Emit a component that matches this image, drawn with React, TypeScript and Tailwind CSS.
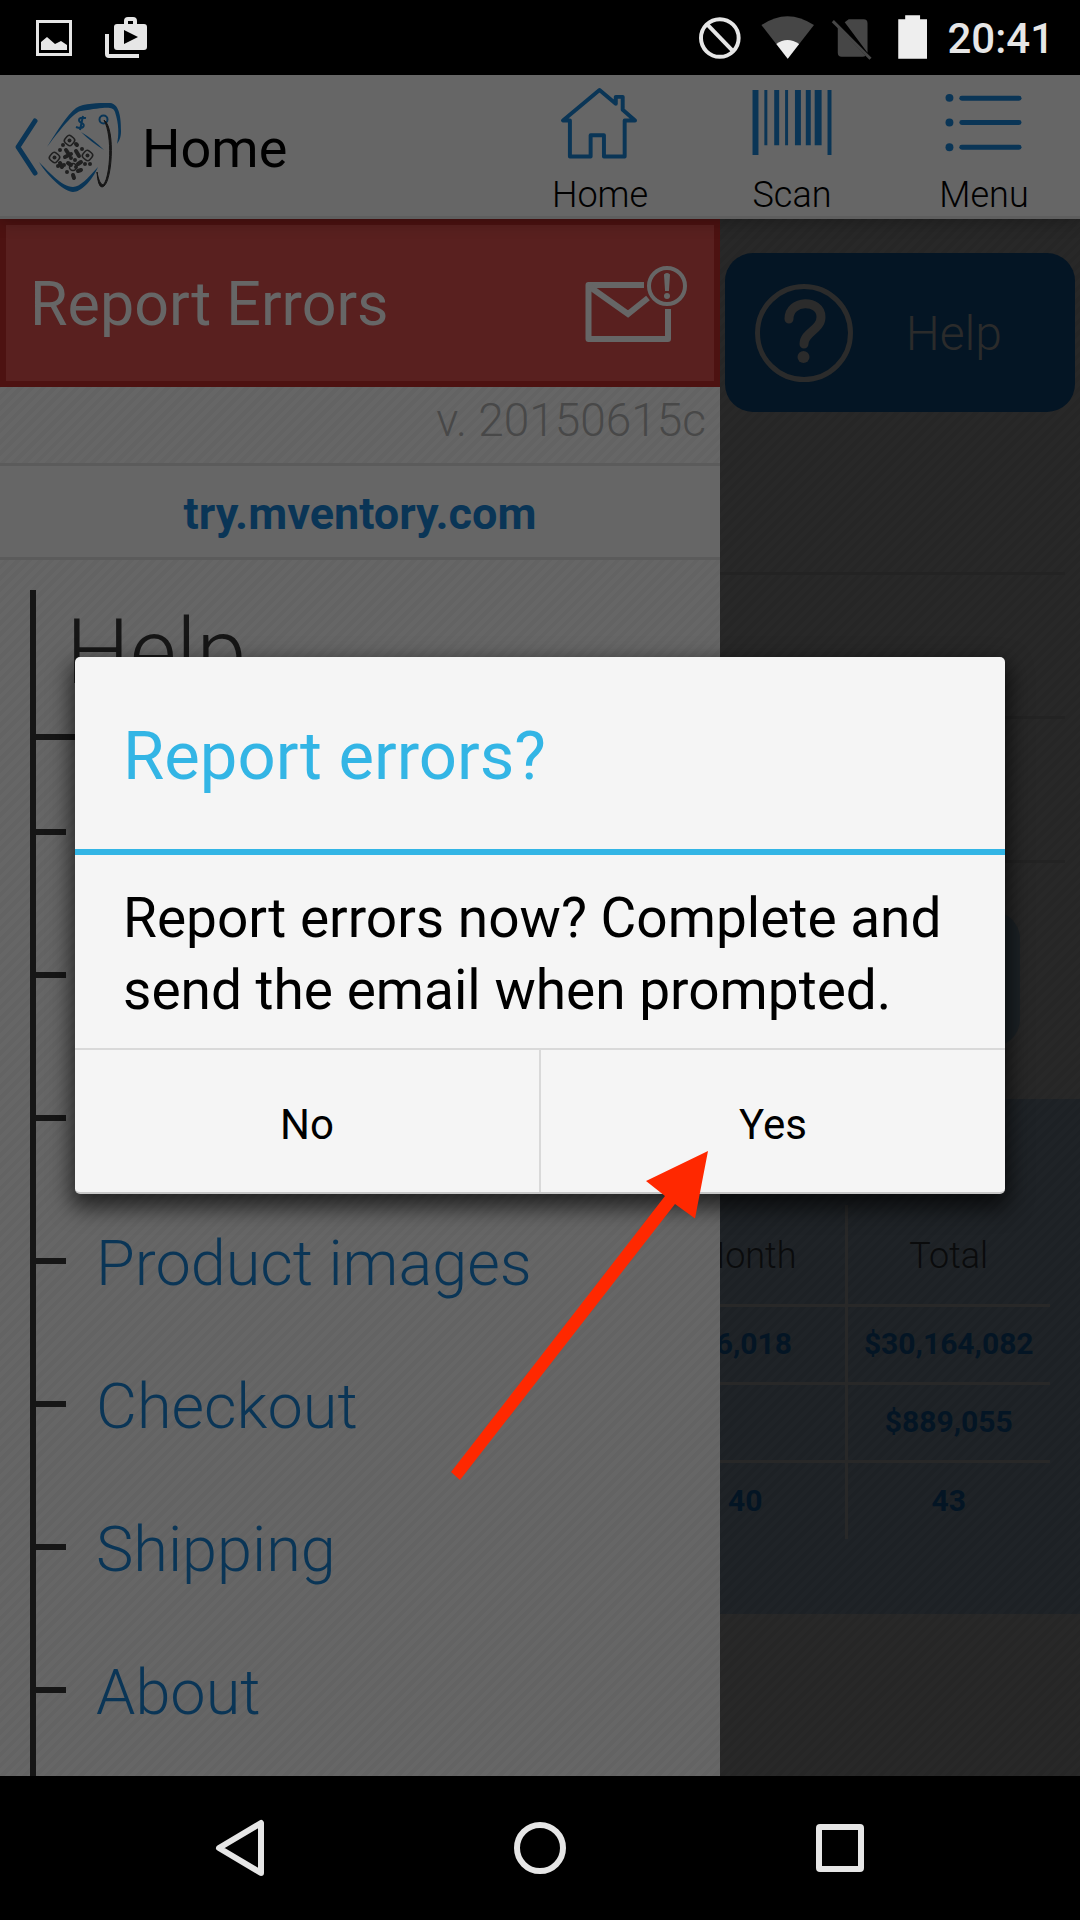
import React from "react";

const stripesLight =
  "bg-[repeating-linear-gradient(135deg,#666666_0_4px,#636363_4px_8px)]";
const stripesDark =
  "bg-[repeating-linear-gradient(135deg,#282828_0_4px,#262626_4px_8px)]";
const stripesBlue =
  "bg-[repeating-linear-gradient(135deg,#1f2327_0_4px,#1d2125_4px_8px)]";

function StatusBar() {
  return (
    <div className="flex h-[75px] items-center justify-between bg-black pr-[26px] pl-9 text-[#e6e6e6]">
      <div className="flex items-center gap-[33px]">
        <svg width="36" height="36" viewBox="0 0 36 36" fill="currentColor">
          <path fillRule="evenodd" d="M0 0h36v36H0zM3 3v30h30V3z" />
          <path d="M5 30v-8l6-5 8 7 6-3 6 4v5z" />
        </svg>
        <svg width="42" height="42" viewBox="0 0 42 42" fill="currentColor">
          <path d="M0 17h4v20h30v4H4q-4 0-4-4z" />
          <path
            fillRule="evenodd"
            d="M12 7h7V4q0-4 4-4h5q4 0 4 4v3h7q3 0 3 3v20q0 3-3 3H12q-3 0-3-3V10q0-3 3-3zM23 4v3h5V4zM19 13v14l14-7z"
          />
        </svg>
      </div>
      <div className="flex items-center">
        <svg width="228" height="46" viewBox="698 15 230 46">
          <g fill="none" stroke="#e6e6e6" strokeWidth="4">
            <circle cx="719" cy="38" r="19" />
            <path d="M706 24l26 27" />
          </g>
          <path d="M787.500 59L761 25q26-18 53 0z" fill="#464646" />
          <path d="M787.500 59L776 44q11-8 23 0z" fill="#eeeeee" />
          <path d="M845 22l4-3h15q4 0 4 4v30zM838 27l28 29q-1 1-3 1h-21q-4 0-4-4z" fill="#464646" />
          <path d="M833 21l38 38" stroke="#464646" strokeWidth="3" />
          <path d="M899 19h7v-4h15v4h7v40h-29z" fill="#eeeeee" />
        </svg>
        <span className="pt-[3px] pl-[20px] text-[42px] leading-none font-medium">20:41</span>
      </div>
    </div>
  );
}

function TagLogo() {
  return (
    <svg width="112" height="94" viewBox="14 101 112 94" fill="none">
      <path d="M37 121L20 147l17 26" stroke="#0a3556" strokeWidth="5" strokeLinecap="round" strokeLinejoin="round" />
      <g fill="#0a3556">
        <path d="M49 147C59 131 69 115 78 108C86 103 100 103 112 103C122 104 123 119 123 131C123 138 121 141 119 144C121 135 121 124 117 112C115 106 108 107 83 111C77 112 67 123 49 147z" />
        <path d="M41 162C51 172 64 187 75 187C82 187 90 178 100 167C94 181 83 192 75 192C67 192 51 178 41 162z" />
        <path d="M83 132q12 7 23 18q-13-8-23-18z" />
      </g>
      <circle cx="105.500" cy="119.500" r="4" stroke="#0a3556" strokeWidth="2" />
      <path d="M88 118q-7-1-7 2q0 2 3 3q3 2 1 4q-2 2-7 0M85 116l-3 14" stroke="#0a3556" strokeWidth="2" />
      <path d="M106 120C118 128 114 187 104 187Q100 187 99 172C101 183 104 186 106 184C112 176 115 137 106 120z" fill="#161616" stroke="#161616" />
      <g stroke="#202020" strokeWidth="1.500">
        <rect x="67" y="136" width="9" height="9" rx="3" transform="rotate(40 71.500 140.500)" />
        <rect x="52" y="153" width="9" height="9" rx="3" transform="rotate(40 56.500 157.500)" />
        <rect x="85" y="151" width="9" height="9" rx="3" transform="rotate(40 89.500 155.500)" />
        <g fill="#202020" stroke="none">
          <circle cx="71.500" cy="140.500" r="2" />
          <circle cx="56.500" cy="157.500" r="2" />
          <circle cx="89.500" cy="155.500" r="2" />
        </g>
        <circle cx="75" cy="167" r="3.500" />
        <path
          d="M65 145h0M62 150h0M78 144l1 1M84 149h0M68 150l2 3M67 157l6-3M73 158h0M78 151l3 5M77 160h0M83 162l-3 2M87 164h0M92 164h0M62 163l2 4M66 165h0M70 163l3 2M80 171l3-1M69 172h0M75 175l1 3M60 166h0M78 167h0"
          strokeWidth="4"
          strokeLinecap="round"
        />
      </g>
    </svg>
  );
}

const headerActions = [
  {
    label: "Home",
    icon: (
      <svg width="80" height="76" viewBox="560 86 80 76" fill="none" stroke="#0a3556" strokeWidth="4" strokeLinejoin="round">
        <path d="M599.500 90L562.500 121h7v36.500h21V136h13.500v21.500h21V121h10.500L623 110V97h-7v7z" />
      </svg>
    ),
  },
  {
    label: "Scan",
    icon: (
      <svg width="80" height="76" viewBox="752 86 80 76" fill="#0a3556">
        <path d="M752 90h6v66h-6zM764 90h3v56h-3zM774 90h5v56h-5zM785 90h3v56h-3zM795 90h6v56h-6zM806 90h5v56h-5zM815 90h7v56h-7zM828 90h4v66h-4z" />
      </svg>
    ),
  },
  {
    label: "Menu",
    icon: (
      <svg width="80" height="76" viewBox="944 86 80 76" fill="#0a3556">
        <circle cx="949" cy="98" r="4" />
        <circle cx="949" cy="123" r="4" />
        <circle cx="949" cy="148" r="4" />
        <rect x="959" y="96" width="63" height="5" rx="2.500" />
        <rect x="959" y="120.500" width="63" height="5" rx="2.500" />
        <rect x="959" y="145.500" width="63" height="5" rx="2.500" />
      </svg>
    ),
  },
];

function Header() {
  return (
    <header className="relative z-10 flex h-36 items-stretch justify-between border-b-[3px] border-[#5e5e5e] bg-[#666666] text-black shadow-[0_2px_16px_rgba(0,0,0,0.3)]">
      <button className="flex items-center gap-4 pt-[5px] pl-3" aria-label="Back to Home">
        <TagLogo />
        <span className="pt-[2px] pl-[2px] text-[54px] leading-none">Home</span>
      </button>
      <div className="flex">
        {headerActions.map((a) => (
          <button key={a.label} className="flex w-48 flex-col items-center pt-[11px]">
            {a.icon}
            <span className="pt-[13px] text-[36px] leading-[42px] font-light">{a.label}</span>
          </button>
        ))}
      </div>
    </header>
  );
}

function MailAlertIcon() {
  return (
    <svg width="104" height="78" viewBox="584 264 104 78" fill="none" stroke="#666666">
      <path d="M644 285H588.500v54h79.500v-30" strokeWidth="6" strokeLinejoin="round" />
      <path d="M590 287l38 27 20-16" strokeWidth="6" />
      <circle cx="667" cy="286" r="18" strokeWidth="4" />
      <path d="M665 275q2-2 4 0l-1 15h-2z" fill="#666666" strokeWidth="2" />
      <circle cx="667" cy="296" r="3" fill="#666666" stroke="none" />
    </svg>
  );
}

const menuItems = ["", "", "", "Product images", "Checkout", "Shipping", "About"];

function Tick({ long = false }: { long?: boolean }) {
  return <span className={long ? "h-[6px] w-[60px] bg-[#161616]" : "h-[6px] w-[30px] bg-[#161616]"} />;
}

function Drawer() {
  return (
    <aside className={`flex w-2/3 flex-col ${stripesLight}`}>
      <button className="flex h-[168px] items-center justify-between border-6 border-[#4d1211] bg-[#59201f] pr-[26px] pl-6 text-[#666666]">
        <span className="pt-[3px] text-[61px] leading-none">Report Errors</span>
        <MailAlertIcon />
      </button>
      <p className="flex h-[79px] items-start justify-end border-b-[3px] border-[#5b5b5b] pt-[6px] pr-[14px] text-[46px] leading-[54px] font-light text-[#484848]">
        v. 20150615c
      </p>
      <div className="flex h-[94px] items-center justify-center border-b-[3px] border-[#5b5b5b] bg-[#666666]">
        <a href="#" className="pt-[3px] text-[45px] leading-none font-bold text-[#0a3556]">
          try.mventory.com
        </a>
      </div>
      <nav className="mt-[30px] ml-[30px] flex flex-1 flex-col border-l-6 border-[#161616]">
        <h2 className="h-[124px] pt-[10px] pl-[30px] text-[90px] leading-[106px] font-light text-[#161616]">Help</h2>
        <div className="flex h-[46px] items-center">
          <Tick long />
        </div>
        <ul>
          {menuItems.map((item, i) => (
            <li key={i} className="flex h-[143px] items-center gap-[30px]">
              <Tick />
              {item && (
                <a href="#" className="pt-[5px] text-[63px] leading-none font-light text-[#0a3556]">
                  {item}
                </a>
              )}
            </li>
          ))}
        </ul>
      </nav>
    </aside>
  );
}

const rows = [
  ["$6,018", "$30,164,082"],
  ["", "$889,055"],
  ["40", "43"],
];

function HomePanel() {
  return (
    <section className={`flex w-1/3 flex-col overflow-hidden ${stripesDark}`}>
      <button className="mx-[5px] mt-[34px] flex h-[159px] items-center justify-between rounded-[28px] bg-[#041524] pr-[73px] pl-[30px] text-[#2b2b2b]">
        <svg width="98" height="98" viewBox="0 0 98 98" fill="none" stroke="currentColor">
          <circle cx="49" cy="49" r="46.500" strokeWidth="5" />
          <path d="M34 35c0-20 32-20 32-2c0 13-17 15-17 27" strokeWidth="9" strokeLinecap="round" />
          <circle cx="48.500" cy="73" r="6" fill="currentColor" stroke="none" />
        </svg>
        <span className="pt-[2px] text-[48px] leading-none font-light">Help</span>
      </button>
      <div className="mr-[15px] h-[163px] border-b-[3px] border-[#232323]" />
      <div className="mr-[15px] h-[144px] border-b-[3px] border-[#232323]" />
      <div className="mr-[15px] h-[144px] border-b-[3px] border-[#232323]" />
      <div className="mt-12 mr-[60px] h-[136px] rounded-r-[28px] bg-[#1c2226]" />
      <div className={`mt-[52px] flex h-[515px] justify-end pt-[106px] pr-[30px] ${stripesBlue}`}>
        <table className="h-[332px] w-[404px] shrink-0 table-fixed border-collapse text-center">
          <thead>
            <tr className="h-[100px] border-b-[3px] border-[#282828] text-[36px] leading-none text-[#0a0b0c]">
              <th scope="col" className="w-[200px] border-r-[3px] border-[#282828] pt-1 font-light">Month</th>
              <th scope="col" className="pt-1 font-light">Total</th>
            </tr>
          </thead>
          <tbody>
            {rows.map(([month, total]) => (
              <tr
                key={total}
                className="h-[78px] border-b-[3px] border-[#282828] text-[30px] leading-none font-bold text-[#041524] last:border-b-0"
              >
                <td className="border-r-[3px] border-[#282828]">{month}</td>
                <td>{total}</td>
              </tr>
            ))}
          </tbody>
        </table>
      </div>
    </section>
  );
}

function ReportDialog() {
  return (
    <div className="absolute inset-0 z-20 flex items-center px-[75px]">
      <div
        role="dialog"
        aria-labelledby="dialog-title"
        className="relative w-full rounded-[5px] border-b-2 border-[#c8c8c8] bg-[#f5f5f5] text-black shadow-[0_10px_22px_4px_rgba(0,0,0,0.65)]"
      >
        <h1
          id="dialog-title"
          className="flex h-[198px] items-center border-b-6 border-[#33b5e5] px-12 pt-[6px] text-[67px] leading-none text-[#33b5e5]"
        >
          Report errors?
        </h1>
        <p className="px-12 pt-[27px] pb-[22px] text-[55px] leading-[72px]">
          Report errors now? Complete and send the email when prompted.
        </p>
        <div className="flex h-[144px] border-t-2 border-[#d9d9d9] text-[42px]">
          <button className="flex-1 border-r-2 border-[#d9d9d9] pt-[6px]">No</button>
          <button className="flex-1 pt-[6px]">Yes</button>
        </div>
        <svg
          className="pointer-events-none absolute top-[494px] left-[375px]"
          width="260"
          height="330"
          viewBox="450 1151 260 330"
          fill="#ff2800"
          aria-hidden="true"
        >
          <path d="M708 1151L646 1181L665 1196L451 1472L460 1480L675 1204L695 1218.500z" />
        </svg>
      </div>
    </div>
  );
}

function NavBar() {
  return (
    <div className="grid h-36 grid-cols-3 items-center justify-items-center bg-black px-[90px]">
      <button aria-label="Back">
        <svg width="52" height="58" viewBox="0 0 52 58" fill="none" stroke="#e6e6e6" strokeWidth="6" strokeLinejoin="round">
          <path d="M47 4v50L5 29z" />
        </svg>
      </button>
      <button aria-label="Home">
        <svg width="52" height="52" viewBox="0 0 52 52" fill="none" stroke="#e6e6e6" strokeWidth="6">
          <circle cx="26" cy="26" r="23" />
        </svg>
      </button>
      <button aria-label="Recent apps">
        <svg width="48" height="48" viewBox="0 0 48 48" fill="none" stroke="#e6e6e6" strokeWidth="6">
          <rect x="3" y="3" width="42" height="42" rx="1" />
        </svg>
      </button>
    </div>
  );
}

export default function App() {
  return (
    <div className="flex min-h-screen flex-col bg-black font-[Roboto,sans-serif]">
      <StatusBar />
      <div className="relative flex flex-1 flex-col">
        <Header />
        <main className="flex flex-1">
          <Drawer />
          <HomePanel />
        </main>
        <ReportDialog />
      </div>
      <NavBar />
    </div>
  );
}
